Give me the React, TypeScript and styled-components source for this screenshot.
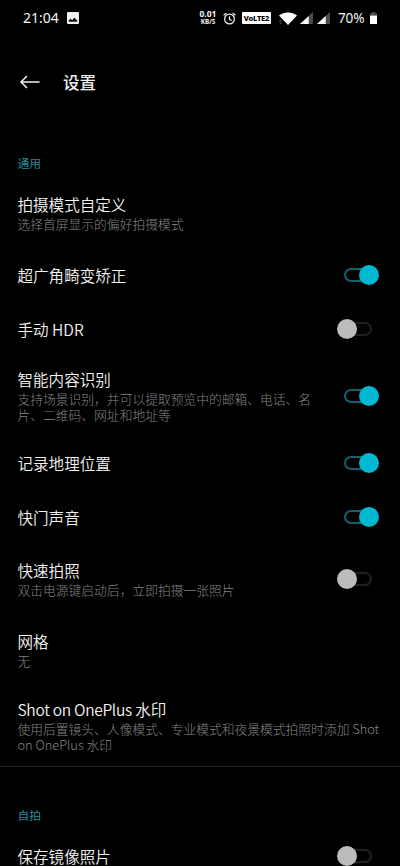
import React from "react";
import styled, { createGlobalStyle } from "styled-components";

const GlobalStyle = createGlobalStyle`
  html, body { margin: 0; background: #000; }
  body { overflow: hidden; }
  * { box-sizing: border-box; }
`;

const Screen = styled.div`
  width: 400px;
  height: 866px;
  overflow: hidden;
  background: #000;
  color: #f2f2f2;
  font-family: "Noto Sans CJK SC", "Noto Sans", sans-serif;
  display: flex;
  flex-direction: column;
`;

const StatusBar = styled.header`
  height: 36px;
  flex: none;
  display: flex;
  align-items: center;
  padding: 0 23px;
  font-family: "Noto Sans", sans-serif;
  font-size: 14px;
  color: #f4f4f4;
`;

const Clock = styled.span`
  width: 44px;
  line-height: 20px;
`;

const StatusIcons = styled.div`
  margin-left: auto;
  display: flex;
  align-items: center;
`;

const NetSpeed = styled.div`
  width: 20px;
  margin-right: 5px;
  display: flex;
  flex-direction: column;
  align-items: center;
  font-family: "Noto Sans", sans-serif;
  font-weight: 700;
  white-space: nowrap;
`;

const SpeedValue = styled.span`
  font-size: 8.5px;
  line-height: 8px;
`;

const SpeedUnit = styled.span`
  font-size: 6.4px;
  line-height: 8px;
`;

const VolteBadge = styled.span`
  width: 29px;
  height: 12px;
  margin: 0 8px 0 6px;
  border-radius: 1px;
  background: #fff;
  color: #000;
  font-size: 7.5px;
  font-weight: 800;
  line-height: 12px;
  text-align: center;
  letter-spacing: -0.2px;
  white-space: nowrap;
`;

const Battery = styled.span`
  width: 27px;
  margin: 0 5px 0 8px;
  font-size: 13.6px;
  line-height: 20px;
  letter-spacing: -0.2px;
  white-space: nowrap;
`;

const Icon = styled.svg<{ $gap?: number }>`
  display: block;
  flex: none;
  margin-right: ${(p) => p.$gap ?? 0}px;
`;

const TitleBar = styled.div`
  height: 91px;
  flex: none;
  display: flex;
  align-items: center;
  padding-left: 20px;
`;

const PageTitle = styled.h1`
  margin: 0 0 0 23px;
  font-size: 16.5px;
  line-height: 24px;
  font-weight: 500;
`;

const SectionLabel = styled.h2<{ $top: number; $bottom: number }>`
  flex: none;
  margin: ${(p) => p.$top}px 0 ${(p) => p.$bottom}px 17.5px;
  font-size: 11.8px;
  line-height: 16px;
  font-weight: 400;
  color: #2b8b9b;
`;

const Row = styled.div<{ $height: number }>`
  flex: none;
  height: ${(p) => p.$height}px;
  display: flex;
  align-items: center;
  padding: 0 21px 0 17.5px;
`;

const RowText = styled.div<{ $narrow: boolean }>`
  flex: 1;
  min-width: 0;
  padding-right: ${(p) => (p.$narrow ? 22 : 0)}px;
  margin-right: ${(p) => (p.$narrow ? 0 : -4)}px;
`;

const RowTitle = styled.div`
  font-size: 15.55px;
  line-height: 20px;
  font-weight: 350;
`;

const LatinRun = styled.span`
  letter-spacing: -0.32px;
`;

const RowHint = styled.div`
  margin-top: 2px;
  margin-bottom: -1px;
  font-size: 12.78px;
  line-height: 16px;
  font-weight: 300;
  color: #858585;
  white-space: pre-line;
`;

const Switch = styled.span<{ $on: boolean }>`
  flex: none;
  width: 42px;
  height: 20px;
  display: flex;
  align-items: center;
  justify-content: ${(p) => (p.$on ? "flex-end" : "flex-start")};
`;

const Track = styled.span<{ $on: boolean }>`
  flex: none;
  width: 27px;
  height: 14px;
  border: 2px solid ${(p) => (p.$on ? "#14606b" : "#202020")};
  border-radius: 7px;
  order: ${(p) => (p.$on ? 0 : 1)};
  margin: ${(p) => (p.$on ? "0 -12px 0 0" : "0 0 0 -12px")};
`;

const Knob = styled.span<{ $on: boolean }>`
  flex: none;
  width: 20px;
  height: 20px;
  border-radius: 50%;
  background: ${(p) => (p.$on ? "#00b8d2" : "#bcbcbc")};
  z-index: 1;
`;

const Divider = styled.div`
  flex: none;
  height: 1px;
  background: #222;
`;

interface Setting {
  title: string;
  latin?: string;
  hint?: string;
  on?: boolean;
  height: number;
}

const general: Setting[] = [
  { title: "拍摄模式自定义", hint: "选择首屏显示的偏好拍摄模式", height: 71 },
  { title: "超广角畸变矫正", on: true, height: 54 },
  { title: "手动 HDR", on: false, height: 53 },
  {
    title: "智能内容识别",
    hint: "支持场景识别，并可以提取预览中的邮箱、电话、名\n片、二维码、网址和地址等",
    on: true,
    height: 81,
  },
  { title: "记录地理位置", on: true, height: 54 },
  { title: "快门声音", on: true, height: 53 },
  { title: "快速拍照", hint: "双击电源键启动后，立即拍摄一张照片", on: false, height: 71 },
  { title: "网格", hint: "无", height: 71 },
  {
    latin: "Shot on OnePlus",
    title: " 水印",
    hint: "使用后置镜头、人像模式、专业模式和夜景模式拍照时添加 Shot\non OnePlus 水印",
    height: 81,
  },
];

const selfie: Setting[] = [{ title: "保存镜像照片", on: false, height: 54 }];

function SettingRow({ title, latin, hint, on, height }: Setting) {
  return (
    <Row $height={height}>
      <RowText $narrow={on !== undefined}>
        <RowTitle>
          {latin && <LatinRun>{latin}</LatinRun>}
          {title}
        </RowTitle>
        {hint && <RowHint>{hint}</RowHint>}
      </RowText>
      {on !== undefined && (
        <Switch $on={on} role="switch" aria-checked={on}>
          <Track $on={on} />
          <Knob $on={on} />
        </Switch>
      )}
    </Row>
  );
}

function Signal({ gap }: { gap: number }) {
  return (
    <Icon $gap={gap} width="13" height="12" viewBox="0 0 13 12">
      <path d="M13 0V12H0Z" fill="#4c4c4c" />
      <path d="M8.7 4V12H0Z" fill="#fff" />
    </Icon>
  );
}

export default function App() {
  return (
    <Screen>
      <GlobalStyle />
      <StatusBar>
        <Clock>21:04</Clock>
        <Icon width="12" height="12" viewBox="0 0 12 12">
          <rect width="12" height="12" rx="1.2" fill="#f4f4f4" />
          <path d="M1.7 9.8V8.4L3.6 6.6 5 8.2 7.4 5.8 10.3 8.6V9.8Z" fill="#111" />
        </Icon>
        <StatusIcons>
          <NetSpeed>
            <SpeedValue>0.01</SpeedValue>
            <SpeedUnit>KB/S</SpeedUnit>
          </NetSpeed>
          <Icon width="13" height="13" viewBox="0 0 13 13" fill="none" stroke="#f4f4f4" strokeWidth="1.2">
            <circle cx="6.5" cy="7" r="4.9" />
            <path d="M6.5 4.2V7.3L8.6 8.6M.6 3.2 3.3 1M12.4 3.2 9.7 1" />
          </Icon>
          <VolteBadge>VoLTE2</VolteBadge>
          <Icon $gap={3} width="18" height="13" viewBox="0 0 18 13">
            <path d="M0 3.6C5-.5 13-.5 18 3.6L9 13Z" fill="#fff" />
            <path d="M0 9.2 1.5 7.6 3 9.2ZM0 10.6 1.5 12.2 3 10.6Z" fill="#555" />
          </Icon>
          <Signal gap={4} />
          <Signal gap={0} />
          <Battery>70%</Battery>
          <Icon width="7" height="12" viewBox="0 0 7 12">
            <path d="M2 0H5V1.2H7V4H0V1.2H2Z" fill="#4c4c4c" />
            <path d="M0 3.6H7V12H0Z" fill="#fff" />
          </Icon>
        </StatusIcons>
      </StatusBar>
      <TitleBar>
        <Icon width="20" height="14" viewBox="0 0 20 14" fill="none" stroke="#f2f2f2" strokeWidth="1.5">
          <path d="M19.5 7H1M7 1 1 7 7 13" />
        </Icon>
        <PageTitle>设置</PageTitle>
      </TitleBar>
      <SectionLabel $top={28} $bottom={6}>通用</SectionLabel>
      {general.map((item) => (
        <SettingRow key={item.title} {...item} />
      ))}
      <Divider />
      <SectionLabel $top={40} $bottom={6}>自拍</SectionLabel>
      {selfie.map((item) => (
        <SettingRow key={item.title} {...item} />
      ))}
    </Screen>
  );
}
